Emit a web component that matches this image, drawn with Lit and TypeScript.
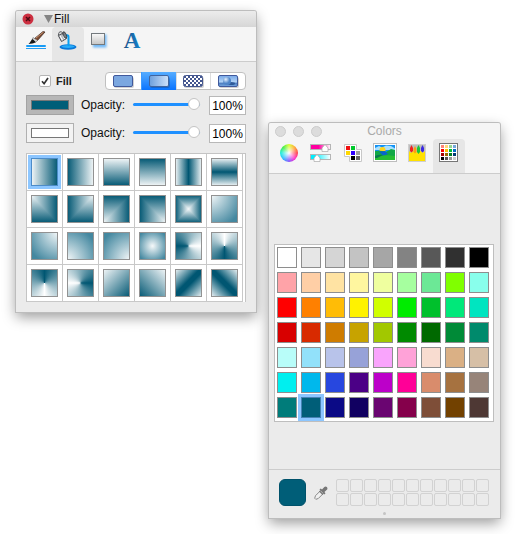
import { LitElement, html, css, svg } from "lit";
import { customElement, state } from "lit/decorators.js";
import { classMap } from "lit/directives/class-map.js";
import { styleMap } from "lit/directives/style-map.js";

const L = "#f6f9fa";
const D = "#005672";
const M = "#4488a0";

const blend = (a: string, b: string, mid = false) =>
  mid
    ? `linear-gradient(${a}, ${D}, ${L}, ${D}), linear-gradient(${b}, ${D}, ${L}, ${D})`
    : `linear-gradient(${a}, ${L}, ${D}), linear-gradient(${b}, ${L}, ${D})`;
const radial = (at: string) => `radial-gradient(farthest-corner at ${at}, ${L}, ${M} 85%)`;
const conic = (from: number) => `conic-gradient(from ${from}deg, #fff, ${D}, #fff)`;

const gradients: [string, string][] = [
  ["Linear right", `linear-gradient(to right, ${L}, ${D})`],
  ["Linear left", `linear-gradient(to left, ${L}, ${D})`],
  ["Linear down", `linear-gradient(to bottom, ${L}, ${D})`],
  ["Linear up", `linear-gradient(to top, ${L}, ${D})`],
  ["Mirrored horizontal", `linear-gradient(to right, ${L}, ${D}, ${L})`],
  ["Mirrored vertical", `linear-gradient(to bottom, ${L}, ${D}, ${L})`],
  ["Square top left", blend("to right", "to bottom")],
  ["Square top right", blend("to left", "to bottom")],
  ["Square bottom left", blend("to right", "to top")],
  ["Square bottom right", blend("to left", "to top")],
  ["Square center", blend("to right", "to bottom", true)],
  ["Radial top left", radial("0% 0%")],
  ["Radial top right", radial("100% 0%")],
  ["Radial bottom left", radial("0% 100%")],
  ["Radial bottom right", radial("100% 100%")],
  ["Radial center", radial("50% 50%")],
  ["Conic right", conic(90)],
  ["Conic top", conic(0)],
  ["Conic bottom", conic(180)],
  ["Conic left", conic(270)],
  ["Diagonal top left", `linear-gradient(135deg, ${L}, ${D})`],
  ["Diagonal top right", `linear-gradient(225deg, ${L}, ${D})`],
  ["Mirrored diagonal rising", `linear-gradient(135deg, ${L}, ${D} 45%, ${D} 55%, ${L})`],
  ["Mirrored diagonal falling", `linear-gradient(45deg, ${L}, ${D} 45%, ${D} 55%, ${L})`],
];

const palette = `
#ffffff #e6e6e6 #d5d5d5 #c3c3c3 #a6a6a6 #838383 #585858 #303030 #000000
#ffa3a8 #ffcfa6 #ffe3a3 #fff69f #efff9f #a6ff9f #6ce896 #80ff00 #89ffec
#ff0000 #ff8000 #ffbc06 #fff200 #d0ff00 #00ec00 #00c02c #00e87a #00e5c0
#d80000 #d82a00 #cf7c00 #c7a300 #a2c800 #008a00 #006900 #008a37 #008a6c
#b8fdf9 #92e1fa #b8c3ea #97a2d8 #f9a4fc #ffa2d8 #f8dcd0 #dab085 #d6bfa6
#00efef #00b8ec #2747df #4b0086 #bc00c9 #ff0097 #d98c6c #a67240 #978479
#007c7a #005e78 #0b0a86 #110061 #6a0571 #85004b #7e4e38 #724100 #4e3834`
  .trim()
  .split(/\s+/);

const shared = css`
  * {
    box-sizing: border-box;
  }
  :host {
    display: block;
    font: 12px/16px "Liberation Sans", Arial, sans-serif;
    color: #111;
  }
  button {
    appearance: none;
    margin: 0;
    padding: 0;
    border: 0;
    background: none;
    font: inherit;
    color: inherit;
  }
  svg {
    display: block;
  }
  .window {
    background: #ebebeb;
    box-shadow: 0 0 0 1px #bdbdbd, 0 5px 14px rgba(0, 0, 0, 0.4);
    border-radius: 2px 2px 0 0;
  }
  .tabs {
    display: flex;
    padding: 0 4px;
    background: #f5f5f5;
    border-bottom: 1px solid #cccccc;
  }
  .tab {
    width: 32px;
    height: 34px;
  }
  .tab.active {
    background: #e6e6e6;
    border-radius: 4px 4px 0 0;
  }
`;

@customElement("fill-window")
class FillWindow extends LitElement {
  @state() private tab = 1;
  @state() private kind = 1;
  @state() private selected = 0;

  static styles = [
    shared,
    css`
      .title {
        display: flex;
        align-items: center;
        height: 16px;
        padding-left: 6px;
        background: linear-gradient(#ececec, #d6d6d6);
        border-radius: 2px 2px 0 0;
      }
      .disclosure {
        margin: 0 1px 0 10px;
      }
      .heading {
        margin: 0;
        font-size: 12px;
        font-weight: 400;
        line-height: 18px;
      }
      .glyph {
        font: bold 23px "Liberation Serif", serif;
      }
      .body {
        padding: 10px;
      }
      .row {
        display: grid;
        grid-template-columns: 79px 1fr;
        align-items: center;
      }
      .check {
        display: flex;
        align-items: center;
        gap: 5px;
        padding-left: 13px;
        font-size: 11px;
        font-weight: 700;
        color: #222;
      }
      .box {
        appearance: none;
        width: 12px;
        height: 12px;
        margin: 0;
        border: 1px solid #b5b5b5;
        border-radius: 2px;
        background: #fff;
      }
      .tick {
        display: grid;
      }
      .tick > * {
        grid-area: 1 / 1;
      }
      .tick svg {
        pointer-events: none;
        visibility: hidden;
      }
      .box:checked + svg {
        visibility: visible;
      }
      .segments {
        display: grid;
        grid-template-columns: repeat(4, 1fr);
        height: 18px;
        border: 1px solid #c0c0c0;
        border-radius: 4px;
        background: #fff;
      }
      .segment {
        display: grid;
        place-items: center;
        border-left: 1px solid #dddddd;
      }
      .segment:first-child {
        border-left: 0;
      }
      .segment.active {
        margin: -1px 0;
        border-color: #3d9bff;
        background: linear-gradient(#57adff, #0a74ff);
      }
      .stroke {
        display: grid;
        grid-template-columns: 48px 45px 1fr 37px;
        column-gap: 7px;
        align-items: center;
        margin-top: 5px;
      }
      .stroke + .stroke {
        margin-top: 8px;
      }
      .well {
        height: 20px;
        padding: 4px;
        border: 1px solid #b0b0b0;
        background: #f3f3f3;
      }
      .well.active {
        border-color: #a3a3a3;
        background: #b7b7b7;
      }
      .ink {
        display: block;
        height: 10px;
        border: 1px solid #777777;
      }
      .range {
        appearance: none;
        width: calc(100% - 2px);
        height: 14px;
        margin: 0 2px 2px 0;
        background: none;
      }
      .range::-webkit-slider-runnable-track {
        height: 3px;
        border-radius: 2px;
        background: #1e90ff;
      }
      .range::-webkit-slider-thumb {
        appearance: none;
        width: 12px;
        height: 12px;
        margin-top: -5px;
        border: 1px solid #c4c4c4;
        border-radius: 50%;
        background: #fff;
      }
      .amount {
        width: 100%;
        height: 19px;
        padding: 2px 0 0;
        border: 1px solid #b8b8b8;
        border-radius: 0;
        background: #fff;
        font: inherit;
        color: #000;
        text-align: center;
      }
      .grid {
        display: grid;
        grid-template-columns: repeat(6, 1fr);
        margin-top: 10px;
        padding-right: 2px;
        border: 1px solid #c4c4c4;
        border-bottom: 0;
        background: #fff;
      }
      .cell {
        height: 37px;
        padding: 4px;
        border-right: 1px solid #c8c8c8;
        border-bottom: 1px solid #c8c8c8;
      }
      .sample {
        display: block;
        width: 100%;
        height: 28px;
        border: 1px solid #929292;
        background-origin: border-box;
        background-blend-mode: darken;
      }
      .sample.selected {
        border-color: #4d8cc8;
        border-radius: 0;
        box-shadow: 0 0 0 3px #8cc6ff;
      }
    `,
  ];

  private tabIcons = [
    [
      "Stroke",
      svg`<rect x="6" y="18" width="20" height="2" rx="1" fill="#189bf5"/>
        <rect x="6" y="21" width="20" height="1" fill="#249df2"/>
        <path d="M14 12 23 4.5 25 5 17 14Z" fill="#7c4a31" stroke="#35231c" stroke-width=".7"/>
        <path d="M16 11 23.5 5" stroke="#dba37d" stroke-width=".8"/>
        <path d="M13 10.5 17.5 13.5 15.5 15.5 12 12.5Z" fill="#d7d7d7" stroke="#777" stroke-width=".6"/>
        <path d="M12.5 12 15.8 15C14 16.8 11 16.7 8.5 17 10.5 15.6 10.5 13.6 12.5 12Z" fill="#171717"/>`,
    ],
    [
      "Fill",
      svg`<ellipse cx="16" cy="20" rx="8.5" ry="2.8" fill="#0b78d8"/>
        <ellipse cx="16" cy="19.5" rx="6.5" ry="1.5" fill="#28adf8"/>
        <path d="M12 8.2H15.2Q16.5 8.2 16.5 10V19" fill="none" stroke="#079ff2" stroke-width="2"/>
        <path d="M6.3 8.5 12.3 5.5 14.5 11.5 9.5 14.5Z" fill="#b9bcc0" stroke="#4a4d52"/>
        <path d="M8 8.8 10.5 13.3M10.3 7.5 13 12" stroke="#fff" stroke-width="1.1"/>
        <ellipse cx="12.8" cy="8" rx="1.5" ry="3.5" transform="rotate(-24 12.8 8)" fill="#777b80" stroke="#33363a" stroke-width=".7"/>
        <path d="M6.5 8Q6.5 4.4 9.2 4.8 11.5 5.2 11 8.5" fill="none" stroke="#55585d"/>`,
    ],
    [
      "Shadow",
      svg`<defs><linearGradient id="sq" x2="0" y2="1"><stop stop-color="#fafafa"/><stop offset="1" stop-color="#c5c5c5"/></linearGradient>
        <filter id="soft" x="-30%" y="-30%" width="160%" height="160%"><feGaussianBlur stdDeviation="1.2"/></filter></defs>
        <rect x="9" y="7.5" width="13.5" height="13" fill="#71b8f7" filter="url(#soft)"/>
        <rect x="7.5" y="6.5" width="13" height="11" fill="url(#sq)" stroke="#74797d"/>`,
    ],
    [
      "Text",
      svg`<defs><linearGradient id="ink" x2="1" y2="0"><stop stop-color="#1a4f86"/><stop offset="1" stop-color="#1685cf"/></linearGradient></defs>
        <text class="glyph" x="16" y="21" text-anchor="middle" fill="url(#ink)">A</text>`,
    ],
  ] as const;

  private kindIcons = [
    ["Solid", svg`<rect x="1.5" y="1.5" width="19" height="11" rx="1.5" fill="#7ba7e0" stroke="#41599c"/>`],
    [
      "Gradient",
      svg`<defs><linearGradient id="lg"><stop stop-color="#6d9fdc"/><stop offset="1" stop-color="#cfe2fa"/></linearGradient></defs>
        <rect x="1.5" y="1.5" width="19" height="11" rx="1.5" fill="url(#lg)" stroke="#41659f"/>`,
    ],
    [
      "Pattern",
      svg`<defs><pattern id="ck" x="2" y="2" width="4" height="4" patternUnits="userSpaceOnUse"><rect width="4" height="4" fill="#fff"/><path d="M0 0h2v2H0zM2 2h2v2H2z" fill="#44568f"/></pattern></defs>
        <rect x="1.5" y="1.5" width="19" height="11" rx="2" fill="url(#ck)" stroke="#44568f"/>`,
    ],
    [
      "Image",
      svg`<defs><linearGradient id="sky" x2="0" y2="1"><stop stop-color="#76a8e8"/><stop offset=".62" stop-color="#b5d5f7"/><stop offset=".66" stop-color="#4677bb"/><stop offset="1" stop-color="#79aae3"/></linearGradient>
        <radialGradient id="ball" cx=".35" cy=".3"><stop stop-color="#e4f1ff"/><stop offset="1" stop-color="#4e84c8"/></radialGradient></defs>
        <rect x="1.5" y="1.5" width="19" height="11" rx="1.5" fill="url(#sky)" stroke="#41599c"/>
        <ellipse cx="14" cy="9.5" rx="4" ry="1.5" fill="#2e5998"/><circle cx="10" cy="7" r="4" fill="url(#ball)"/>`,
    ],
  ] as const;

  private opacityRow(id: string, name: string, color: string, active: boolean) {
    return html`<div class="stroke">
      <button type="button" class=${classMap({ well: true, active })} aria-label=${name}>
        <span class="ink" style=${styleMap({ background: color })}></span>
      </button>
      <label for=${id}>Opacity:</label>
      <input class="range" id=${id} type="range" min="0" max="100" value="100" />
      <input class="amount" type="text" value="100%" aria-label="${name} opacity" />
    </div>`;
  }

  render() {
    return html`<section class="window" aria-label="Fill">
      <header class="title">
        <button type="button" aria-label="Close">
          <svg width="12" height="12" viewBox="0 0 12 12">
            <circle cx="6" cy="6" r="5.5" fill="#cc2f40" />
            <path d="M4 4 8 8M8 4 4 8" stroke="#4e0b13" stroke-width="1.5" />
          </svg>
        </button>
        <svg class="disclosure" width="9" height="8" viewBox="0 0 9 8"><path d="M0 0H9L4.5 8Z" fill="#858585" /></svg>
        <h2 class="heading">Fill</h2>
      </header>
      <nav class="tabs">
        ${this.tabIcons.map(
          ([name, icon], i) => html`<button
            type="button"
            class=${classMap({ tab: true, active: this.tab === i })}
            aria-label=${name}
            @click=${() => (this.tab = i)}
          >
            <svg width="32" height="34" viewBox="0 0 32 34">${icon}</svg>
          </button>`
        )}
      </nav>
      <div class="body">
        <div class="row">
          <label class="check">
            <span class="tick">
              <input class="box" type="checkbox" checked />
              <svg width="12" height="12" viewBox="0 0 12 12">
                <path d="M3 6.2 5.1 8.7 9 3" fill="none" stroke="#333" stroke-width="1.7" />
              </svg>
            </span>
            Fill
          </label>
          <div class="segments">
            ${this.kindIcons.map(
              ([name, icon], i) => html`<button
                type="button"
                class=${classMap({ segment: true, active: this.kind === i })}
                aria-label=${name}
                @click=${() => (this.kind = i)}
              >
                <svg width="22" height="15" viewBox="0 0 22 15">
                  <rect x="2" y="3" width="20" height="11" rx="2" fill="#000" opacity=".18" />
                  ${icon}
                </svg>
              </button>`
            )}
          </div>
        </div>
        ${this.opacityRow("first", "First color", "#005e78", true)}
        ${this.opacityRow("second", "Second color", "#ffffff", false)}
        <div class="grid">
          ${gradients.map(
            ([name, background], i) => html`<div class="cell">
              <button
                type="button"
                class=${classMap({ sample: true, selected: this.selected === i })}
                style=${styleMap({ backgroundImage: background })}
                aria-label=${name}
                @click=${() => (this.selected = i)}
              ></button>
            </div>`
          )}
        </div>
      </div>
    </section>`;
  }
}

@customElement("colors-window")
class ColorsWindow extends LitElement {
  @state() private tab = 5;
  @state() private selected = 55;

  static styles = [
    shared,
    css`
      .title {
        display: grid;
        grid-template-columns: 1fr auto 1fr;
        align-items: center;
        height: 16px;
        padding: 0 6px;
        background: #f5f5f5;
        border-radius: 2px 2px 0 0;
      }
      .lights {
        display: flex;
        gap: 7px;
      }
      .light {
        width: 11px;
        height: 11px;
        border: 1px solid #cccccc;
        border-radius: 50%;
        background: #dcdcdc;
      }
      .heading {
        margin: 0;
        font-size: 12px;
        font-weight: 400;
        line-height: 16px;
        color: #aaaaaa;
      }
      .wheel {
        width: 18px;
        height: 18px;
        margin: 0 auto 6px;
        border-radius: 50%;
        background: radial-gradient(circle, #fff, transparent 65%),
          conic-gradient(from 90deg, #f45, #f3c, #85f, #3bf, #2ed, #4e4, #df3, #fa3, #f45);
      }
      .body {
        padding: 70px 6px 47px 5px;
        border-bottom: 1px solid #cccccc;
      }
      .palette {
        display: grid;
        grid-template-columns: repeat(9, 1fr);
        gap: 4px;
        padding: 2px 4px 3px 2px;
        border: 1px solid #bebebe;
        background: #fff;
      }
      .color {
        height: 21px;
        border: 1px solid #8e8e8e;
      }
      .color.selected {
        border-color: #4782b4;
        box-shadow: 0 0 0 3px #8cc6ff;
      }
      .footer {
        display: flex;
        align-items: center;
        gap: 8px;
        padding: 9px 11px 0 10px;
      }
      .current {
        width: 27px;
        height: 27px;
        border: 1px solid #00526b;
        border-radius: 6px;
      }
      .slots {
        flex: 1;
        display: grid;
        grid-template-columns: repeat(11, 1fr);
        gap: 1px;
      }
      .slot {
        height: 13px;
        border: 1px solid #d2d2d2;
        border-radius: 2px;
      }
      .grip {
        display: flex;
        justify-content: center;
        padding: 6px 0 3px;
      }
      .dot {
        width: 3px;
        height: 3px;
        border-radius: 50%;
        background: #c4c4c4;
      }
    `,
  ];

  private squares(colors: string[], columns: number, x: number, y: number, size: number, pitch: number) {
    return colors.map(
      (fill, i) =>
        svg`<rect x=${x + (i % columns) * pitch} y=${y + Math.floor(i / columns) * pitch} width=${size} height=${size} fill=${fill}/>`
    );
  }

  private tabIcons = [
    ["Color wheel", null],
    [
      "Sliders",
      svg`<defs><linearGradient id="pk"><stop offset=".4" stop-color="#ff00a0"/><stop offset="1" stop-color="#fff"/></linearGradient>
        <linearGradient id="cy"><stop offset=".2" stop-color="#00efff"/><stop offset="1" stop-color="#fff"/></linearGradient></defs>
        <rect x="5.500" y="5.500" width="20" height="5" fill="url(#pk)" stroke="#b5b5b5"/>
        <rect x="5.500" y="15.500" width="20" height="5" fill="url(#cy)" stroke="#b5b5b5"/>
        <path d="M20 5.500 23 9V12.500H17V9Z" fill="#fff" stroke="#aaa" stroke-width=".7"/>
        <path d="M12 15.500 15 19V22.500H9V19Z" fill="#fff" stroke="#aaa" stroke-width=".7"/>`,
    ],
    [
      "Palettes",
      svg`<path d="M7.500 5.500H19.500V10.500H24.500V22.500H12.500V17.500H7.500Z" fill="#fff" stroke="#c8c8c8"/>
        ${this.squares(["#f01010", "#00c82c", "#ffd800", "#3000ff"], 2, 9, 7, 4, 5)}
        <rect x="19" y="12" width="4" height="4" fill="#a0a0a0"/><rect x="14" y="17" width="4" height="4" fill="#000"/><rect x="19" y="17" width="4" height="4" fill="#666"/>`,
    ],
    [
      "Image",
      svg`<rect x="4.500" y="4.500" width="23" height="18" fill="#fff" stroke="#bdbdbd"/>
        <rect x="6" y="6" width="20" height="15" fill="#1292f5"/>
        <path d="M6 9 10 7 13 8.500 17 6.500 22 7 26 9.500V11H6Z" fill="#a8e0ff"/>
        <circle cx="13.500" cy="11" r="3" fill="#ffd51c"/>
        <path d="M6 12Q13 11 17 13L22 10 26 11V21H6Z" fill="#11a746"/>
        <path d="M10 12.500 16 12 19 15 14 17Z" fill="#0865c9"/>
        <path d="M6 18Q14 15 26 17V21H6Z" fill="#26bd32"/>
        <path d="M6 17Q10 15 14 16L8 19H6Z" fill="#08764f"/>`,
    ],
    [
      "Crayons",
      svg`<rect x="7.500" y="5.500" width="17" height="17" fill="#bdbdbd" stroke="#cfcfcf"/>
        <path d="M8 12 10 14 13 11.500 16 13.500 19 11.500 22 14 24 12V22H8Z" fill="#ffe100"/>
        <path d="M9 12V9L10.500 6 12 9V12L10.500 13.500Z" fill="#e22"/>
        <path d="M12.500 13V10L14 7 15.500 10V13L14 14.500Z" fill="#ff9d13"/>
        <path d="M16 13V9L17.500 6 19 9V13L17.500 15Z" fill="#15c83a"/>
        <path d="M20 12V9L21.500 6 23 9V12L21.500 13.500Z" fill="#3b29e2"/>`,
    ],
    [
      "Swatches",
      svg`<rect x="6.500" y="4.500" width="18" height="18" fill="#fff" stroke="#767676"/>
        ${this.squares(
          ["#ff8578", "#ffd978", "#94d694", "#75a8dc", "#fa0000", "#ffc000", "#00bd35", "#006bc4",
            "#a60000", "#9c6b00", "#007c22", "#003a73", "#000", "#555", "#999", "#ccc"],
          4, 8, 6, 3, 4
        )}`,
    ],
  ] as const;

  render() {
    return html`<section class="window" aria-label="Colors">
      <header class="title">
        <div class="lights">
          ${["Close", "Minimize", "Zoom"].map(
            (name) => html`<button type="button" class="light" aria-label=${name}></button>`
          )}
        </div>
        <h2 class="heading">Colors</h2>
      </header>
      <nav class="tabs">
        ${this.tabIcons.map(
          ([name, icon], i) => html`<button
            type="button"
            class=${classMap({ tab: true, active: this.tab === i })}
            aria-label=${name}
            @click=${() => (this.tab = i)}
          >
            ${icon
              ? html`<svg width="32" height="34" viewBox="0 0 32 34">${icon}</svg>`
              : html`<div class="wheel"></div>`}
          </button>`
        )}
      </nav>
      <div class="body">
        <div class="palette">
          ${palette.map(
            (background, i) => html`<button
              type="button"
              class=${classMap({ color: true, selected: this.selected === i })}
              style=${styleMap({ background })}
              aria-label=${background}
              @click=${() => (this.selected = i)}
            ></button>`
          )}
        </div>
      </div>
      <footer class="footer">
        <div class="current" style=${styleMap({ background: palette[this.selected] })}></div>
        <button type="button" aria-label="Pick color">
          <svg width="14" height="14" viewBox="0 0 14 14">
            <path d="M7 4.200 1.500 9.700.7 12.200 1.800 13.300 4.300 12.500 9.800 7" fill="#f1f1f1" stroke="#8a8a8a" />
            <path d="M5.500 3.500 6.700 2.500 8 3.600 10.300 1.100C12-.6 14.600 1.900 12.900 3.700L10.400 6 11.500 7.300 10.500 8.500Z" fill="#777" />
            <path d="M6 4.500 9.500 8 8.500 9 5 5.500Z" fill="#777" />
          </svg>
        </button>
        <div class="slots">${Array.from({ length: 22 }, () => html`<div class="slot"></div>`)}</div>
      </footer>
      <div class="grip"><span class="dot"></span></div>
    </section>`;
  }
}

@customElement("app-root")
class AppRoot extends LitElement {
  static styles = css`
    :host {
      display: grid;
      grid-template-columns: minmax(0, 240fr) minmax(0, 231fr);
      column-gap: 13px;
      align-items: start;
      padding: 11px 15px 16px 16px;
      background: #fff;
    }
    .lower {
      margin-top: 112px;
    }
  `;

  render() {
    return html`<fill-window></fill-window><colors-window class="lower"></colors-window>`;
  }
}
